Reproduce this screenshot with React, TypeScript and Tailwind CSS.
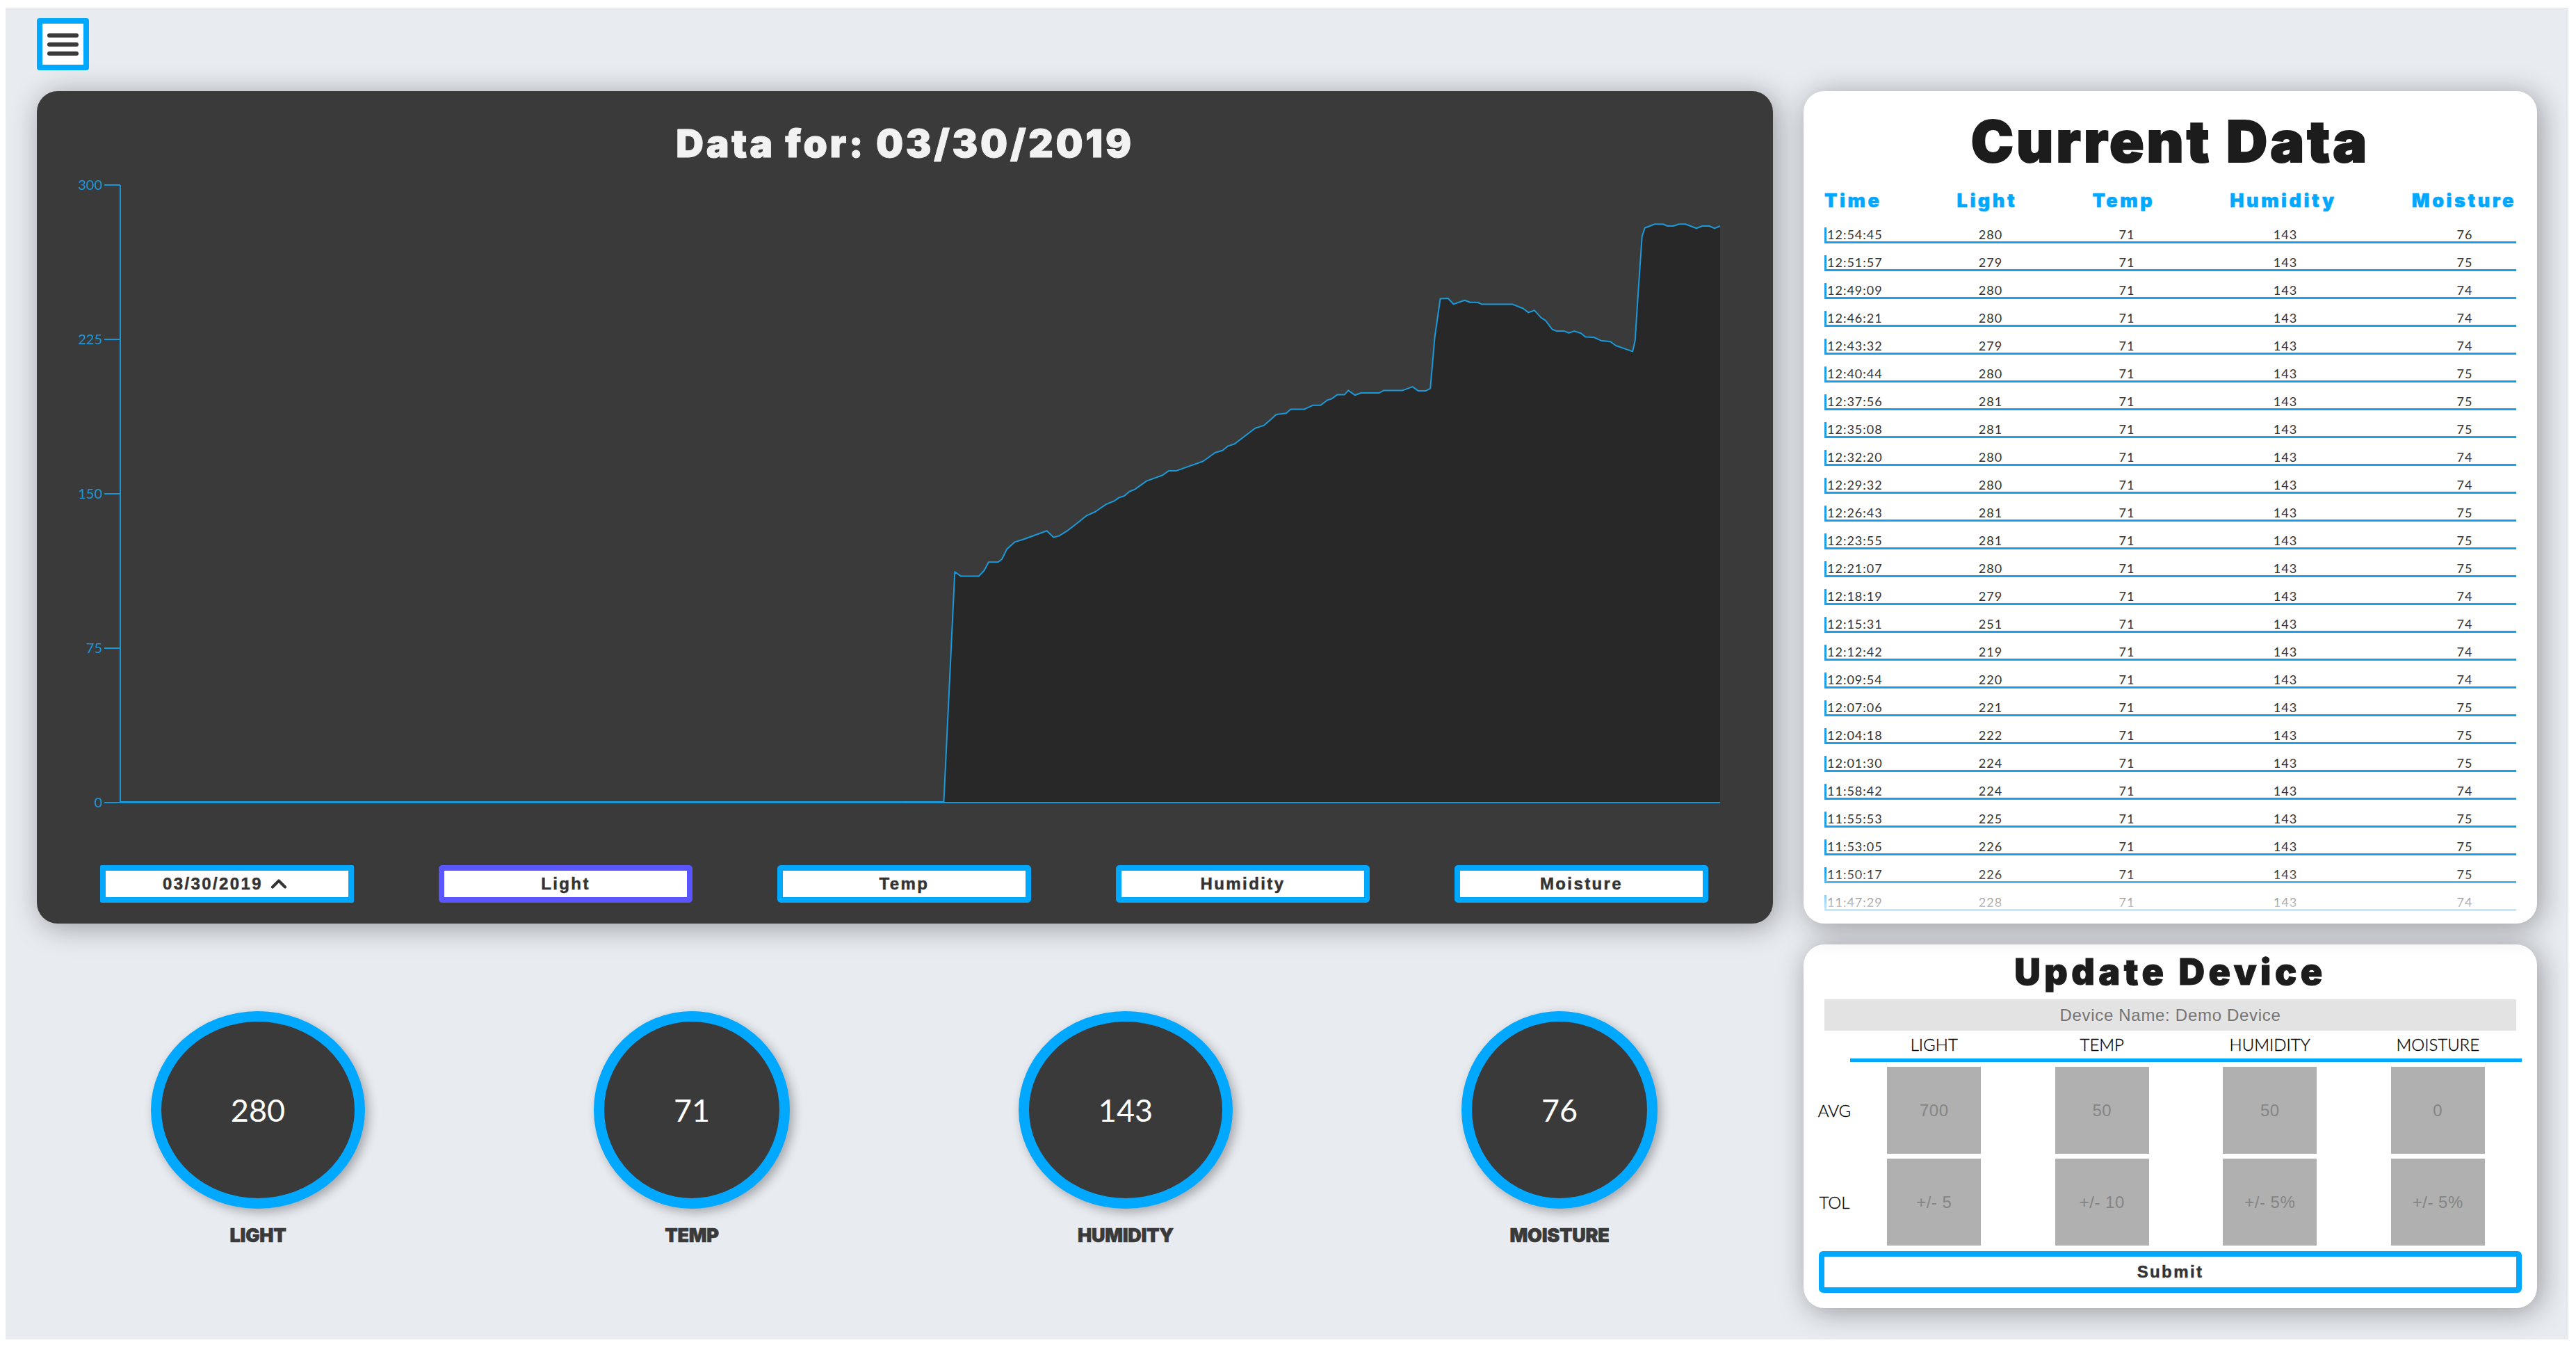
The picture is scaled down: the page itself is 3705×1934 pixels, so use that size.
import { ChevronUp } from 'lucide-react';

// chart trace, read off the reference in page pixels
const MID: [number, number][] = [
  [0,1518],[72,1518],[92,884],[103,896],[135,896],[145,880],[153,857],[170,857],[177,849],[186,821],[200,802],[215,795],[258,771],[270,789],[280,785],[295,771],[312,751],[330,729],[345,719],[365,698],[380,689],[388,680],[398,675],[407,663],[417,657],[438,634],[467,618],[478,606],[492,606],[540,580],[562,556],[575,550],[585,538],[597,532],[634,489],[650,481],[662,465],[672,451],[690,448],[698,437],[722,437],[738,426],[752,426],[764,412],[772,408],[782,397],[795,397],[802,385],[814,398],[825,392],[858,392],[866,385],[900,385],[918,375],[928,386],[942,386],[950,380],[958,240],[968,133],[982,132],[992,148],[1012,137],[1022,143],[1035,143],[1043,148],[1098,148],[1118,160],[1127,171],[1138,165],[1150,185],[1158,193],[1170,217],[1178,222],[1192,222],[1200,227],[1210,222],[1222,228],[1230,238],[1245,239],[1258,248],[1275,251],[1285,262],[1315,278],
];
const TAIL: [number, number][] = [
  [215,600],[228,400],[245,150],[257,113],[300,97],[335,97],[355,105],[380,105],[405,97],[432,97],[480,115],[505,105],[535,105],[558,115],[582,105],
];
const trace = [
  ...MID.map(([x, y]) => [1300 + x * 0.797, 360 + y * 0.523]),
  ...TAIL.map(([x, y]) => [2280 + x / 3, 290 + y / 3]),
];
const linePts = trace.map((p) => p.map((n) => n.toFixed(1)).join(',')).join(' ');
const ticks = [300, 225, 150, 75, 0];

const ROWS: [string, number, number][] = [
  ['12:54:45', 280, 76], ['12:51:57', 279, 75], ['12:49:09', 280, 74], ['12:46:21', 280, 74], ['12:43:32', 279, 74],
  ['12:40:44', 280, 75], ['12:37:56', 281, 75], ['12:35:08', 281, 75], ['12:32:20', 280, 74], ['12:29:32', 280, 74],
  ['12:26:43', 281, 75], ['12:23:55', 281, 75], ['12:21:07', 280, 75], ['12:18:19', 279, 74], ['12:15:31', 251, 74],
  ['12:12:42', 219, 74], ['12:09:54', 220, 74], ['12:07:06', 221, 75], ['12:04:18', 222, 75], ['12:01:30', 224, 75],
  ['11:58:42', 224, 74], ['11:55:53', 225, 75], ['11:53:05', 226, 75], ['11:50:17', 226, 75], ['11:47:29', 228, 74],
];

const STATS = [
  { label: 'LIGHT', value: 280, width: 'w-[308px]' },
  { label: 'TEMP', value: 71, width: 'w-[282px]' },
  { label: 'HUMIDITY', value: 143, width: 'w-[308px]' },
  { label: 'MOISTURE', value: 76, width: 'w-[282px]' },
];

function Chart() {
  return (
    <svg viewBox="53 250 2497 920" className="block w-[2497px] h-[920px]">
      <polygon points={`${linePts} 2474,1154 1357,1154`} fill="#292828" />
      <polyline points="173,266 173,1154 2474,1154" fill="none" stroke="#1a96d4" strokeWidth="2" />
      <line x1="173" y1="1153.5" x2="1357" y2="1153.5" stroke="#1a96d4" strokeWidth="3" />
      <polyline points={linePts} fill="none" stroke="#1a9ad9" strokeWidth="2" strokeLinejoin="round" />
      {ticks.map((t, i) => (
        <g key={t}>
          <line x1="150" x2="173" y1={266 + i * 222} y2={266 + i * 222} stroke="#1a96d4" strokeWidth="2" />
          <text x="147" y={266 + i * 222 + 7} textAnchor="end" fontSize="20" fill="#1a96d4" fontFamily="Lato, sans-serif">
            {t}
          </text>
        </g>
      ))}
    </svg>
  );
}

function ChartButton({ children, active, square }: { children: React.ReactNode; active?: boolean; square?: boolean }) {
  return (
    <button
      className={`w-[365px] h-[54px] bg-white border-8 flex items-center justify-center font-['Liberation_Sans'] font-bold text-[24px] tracking-[2.4px] text-[#333] [-webkit-text-stroke:0.5px_#333] ${
        active ? 'border-[#5a55ff]' : 'border-[#00a8ff]'
      } ${square ? 'rounded-[2px]' : 'rounded-[5px]'}`}
    >
      {children}
    </button>
  );
}

function CurrentData() {
  return (
    <div className="relative h-[1197px] bg-white rounded-[30px] overflow-hidden shadow-[5px_5px_40px_rgba(0,0,0,0.35)] px-[30px]">
      <h1 className="h-[140px] pt-[23px] text-center font-['Inter'] text-[82px] leading-[100px] font-black tracking-[4px] text-[#1c1c1c] [-webkit-text-stroke:2px_#1c1c1c]">
        Current Data
      </h1>
      <div className="flex justify-between h-[56px] pt-[1px] font-['Inter'] text-[27px] leading-[34px] font-black tracking-[3.5px] text-[#00a8ff] [-webkit-text-stroke:0.5px_#00a8ff]">
        <span>Time</span>
        <span>Light</span>
        <span>Temp</span>
        <span>Humidity</span>
        <span>Moisture</span>
      </div>
      <div className="flex flex-col gap-[17px]">
        {ROWS.map(([time, light, moisture]) => (
          <div
            key={time}
            className="grid grid-cols-[87px_298px_94px_362px_154px] h-[23px] border-l-[3px] border-b-[3px] border-[#1a9fe8] text-[18px] leading-[20px] tracking-[1px] text-[#333] text-center"
          >
            <span className="text-left pl-[1px]">{time}</span>
            <span>{light}</span>
            <span>71</span>
            <span>143</span>
            <span>{moisture}</span>
          </div>
        ))}
      </div>
      <div className="absolute inset-x-0 top-[1119px] h-[70px] bg-gradient-to-b from-transparent to-white/90" />
    </div>
  );
}

const AVG = ['700', '50', '50', '0'];
const TOL = ['+/- 5', '+/- 10', '+/- 5%', '+/- 5%'];

function ValueRow({ label, values }: { label: string; values: string[] }) {
  return (
    <div className="grid grid-cols-[45px_repeat(4,241.5px)] h-[125px]">
      <div className="flex items-center justify-center text-[24px] font-light text-black [-webkit-text-stroke:0.3px_#000]">{label}</div>
      {values.map((v, i) => (
        <div key={i} className="flex justify-center">
          <div className="w-[135px] h-[125px] bg-[#b0b0b0] flex items-center justify-center font-['Liberation_Sans'] text-[24px] tracking-[0.5px] text-[#858585]">
            {v}
          </div>
        </div>
      ))}
    </div>
  );
}

function UpdateDevice() {
  return (
    <div className="h-[523px] bg-white rounded-[30px] shadow-[5px_5px_40px_rgba(0,0,0,0.35)] px-[22px]">
      <h2 className="h-[79px] pt-[5px] text-center font-['Inter'] text-[52px] leading-[70px] font-black tracking-[5.5px] text-[#1c1c1c] [-webkit-text-stroke:1px_#1c1c1c]">
        Update Device
      </h2>
      <div className="mx-[8px] h-[45px] bg-[#e3e3e3] flex items-center justify-center font-['Liberation_Sans'] text-[24px] tracking-[0.7px] text-[#757575]">
        Device Name: Demo Device
      </div>
      <div className="ml-[45px] h-[45px] grid grid-cols-4 border-b-[5px] border-[#00a8ff] text-[24px] leading-[40px] font-light text-black text-center [-webkit-text-stroke:0.3px_#000]">
        <span>LIGHT</span>
        <span>TEMP</span>
        <span>HUMIDITY</span>
        <span>MOISTURE</span>
      </div>
      <div className="flex flex-col gap-[7px] mt-[7px]">
        <ValueRow label="AVG" values={AVG} />
        <ValueRow label="TOL" values={TOL} />
      </div>
      <button className="mt-[8px] w-full h-[60px] bg-white border-8 border-[#00a8ff] rounded-[6px] font-['Liberation_Sans'] font-bold text-[24px] tracking-[2.4px] text-[#333] [-webkit-text-stroke:0.5px_#333]">
        Submit
      </button>
    </div>
  );
}

export default function App() {
  return (
    <div className="min-h-[1934px] bg-white pt-[11px] px-[8px] pb-[8px] font-['Lato',sans-serif]">
      <div className="h-[1915px] w-[3686px] bg-[#e8ebf0] pt-[15px] pl-[45px] overflow-hidden">
        <button className="w-[75px] h-[75px] border-8 border-[#00a8ff] rounded-[4px] bg-white flex flex-col items-center justify-center gap-[7px]">
          <span className="w-[45px] h-[6px] rounded-full bg-[#3a3a3a]" />
          <span className="w-[45px] h-[6px] rounded-full bg-[#3a3a3a]" />
          <span className="w-[45px] h-[6px] rounded-full bg-[#3a3a3a]" />
        </button>

        <div className="flex gap-[44px] mt-[30px]">
          {/* Left column */}
          <div className="w-[2497px]">
            <div className="h-[1197px] bg-[#3a3a3a] rounded-[30px] shadow-[5px_5px_40px_rgba(0,0,0,0.35)]">
              <h1 className="h-[119px] pt-[40px] text-center font-['Inter'] text-[55px] leading-[70px] font-black tracking-[3.7px] text-[#f2f2f2] [-webkit-text-stroke:1px_#f2f2f2]">
                Data for: 03/30/2019
              </h1>
              <Chart />
              <div className="flex justify-between pl-[91px] pr-[93px] mt-[74px]">
                <ChartButton square>
                  03/30/2019
                  <ChevronUp size={36} strokeWidth={2.75} className="ml-[5px]" />
                </ChartButton>
                <ChartButton active>Light</ChartButton>
                <ChartButton>Temp</ChartButton>
                <ChartButton>Humidity</ChartButton>
                <ChartButton>Moisture</ChartButton>
              </div>
            </div>

            <div className="grid grid-cols-[repeat(4,624px)] ml-[6px] mt-[126px]">
              {STATS.map((s) => (
                <div key={s.label} className="flex flex-col items-center">
                  <div
                    className={`${s.width} h-[284px] rounded-[50%] border-[15px] border-[#00a8ff] bg-[#3a3a3a] flex items-center justify-center pt-[2px] text-[45px] text-white shadow-[5px_5px_15px_rgba(0,0,0,0.3)]`}
                  >
                    {s.value}
                  </div>
                  <div className="mt-[22px] font-['Inter'] text-[27px] leading-[34px] font-black tracking-[-0.3px] text-[#3a3a3a] [-webkit-text-stroke:0.6px_#3a3a3a]">
                    {s.label}
                  </div>
                </div>
              ))}
            </div>
          </div>

          {/* Right column */}
          <div className="w-[1055px] flex flex-col gap-[30px]">
            <CurrentData />
            <UpdateDevice />
          </div>
        </div>
      </div>
    </div>
  );
}
